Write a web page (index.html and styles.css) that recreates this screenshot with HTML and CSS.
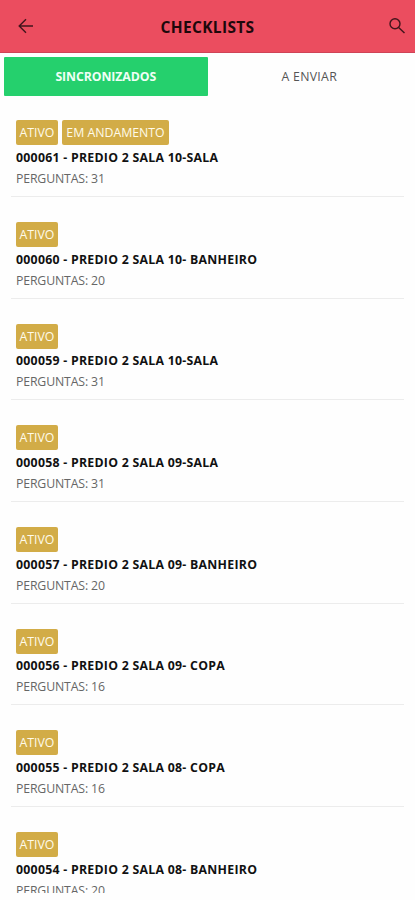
FILE: index.html
```html
<!DOCTYPE html>
<html lang="pt-BR">
<head>
<meta charset="utf-8">
<meta name="viewport" content="width=device-width, initial-scale=1">
<title>Checklists</title>
<link rel="stylesheet" href="styles.css">
</head>
<body>
<div class="app">
  <header class="header">
    <svg class="icon" viewBox="0 0 16 16" aria-hidden="true"><path d="M15 8H1.8M8 1.2 1.2 8 8 14.8"/></svg>
    <h1 class="title">CHECKLISTS</h1>
    <svg class="icon search" viewBox="0 0 16 16" aria-hidden="true"><circle cx="6" cy="5.8" r="5"/><path d="m9.6 9.4 5.9 5.7"/></svg>
  </header>
  <nav class="tabs">
    <a class="tab active"><span>SINCRONIZADOS</span></a>
    <a class="tab"><span>A ENVIAR</span></a>
  </nav>
  <main class="list">
    <article class="item">
      <div class="badges"><span class="badge">ATIVO</span><span class="badge wide">EM ANDAMENTO</span></div>
      <h2 class="name">000061 - PREDIO 2 SALA 10-SALA</h2>
      <p class="count">PERGUNTAS: 31</p>
    </article>
    <article class="item">
      <div class="badges"><span class="badge">ATIVO</span></div>
      <h2 class="name">000060 - PREDIO 2 SALA 10- BANHEIRO</h2>
      <p class="count">PERGUNTAS: 20</p>
    </article>
    <article class="item">
      <div class="badges"><span class="badge">ATIVO</span></div>
      <h2 class="name">000059 - PREDIO 2 SALA 10-SALA</h2>
      <p class="count">PERGUNTAS: 31</p>
    </article>
    <article class="item">
      <div class="badges"><span class="badge">ATIVO</span></div>
      <h2 class="name">000058 - PREDIO 2 SALA 09-SALA</h2>
      <p class="count">PERGUNTAS: 31</p>
    </article>
    <article class="item">
      <div class="badges"><span class="badge">ATIVO</span></div>
      <h2 class="name">000057 - PREDIO 2 SALA 09- BANHEIRO</h2>
      <p class="count">PERGUNTAS: 20</p>
    </article>
    <article class="item">
      <div class="badges"><span class="badge">ATIVO</span></div>
      <h2 class="name">000056 - PREDIO 2 SALA 09- COPA</h2>
      <p class="count">PERGUNTAS: 16</p>
    </article>
    <article class="item">
      <div class="badges"><span class="badge">ATIVO</span></div>
      <h2 class="name">000055 - PREDIO 2 SALA 08- COPA</h2>
      <p class="count">PERGUNTAS: 16</p>
    </article>
    <article class="item">
      <div class="badges"><span class="badge">ATIVO</span></div>
      <h2 class="name">000054 - PREDIO 2 SALA 08- BANHEIRO</h2>
      <p class="count">PERGUNTAS: 20</p>
    </article>
  </main>
</div>
</body>
</html>
```
FILE: styles.css
```css
* { box-sizing: border-box; }
body {
  margin: 0;
  background: #fefefe;
  font-family: "Open Sans", "Noto Sans", sans-serif;
}
.app {
  display: flex;
  flex-direction: column;
  height: 893px;
  overflow: hidden;
}
.header {
  flex: none;
  display: grid;
  grid-template-columns: 16px 1fr 16px;
  align-items: center;
  height: 53px;
  padding: 0 10px 0 18px;
  background: #eb4d5f;
  border-bottom: 1px solid #cf4357;
}
.icon {
  width: 16px;
  height: 16px;
  fill: none;
  stroke: #42151c;
  stroke-width: 1.4;
}
.title {
  margin: 0;
  padding: 1px 8px 0 0;
  text-align: center;
  font-size: 15.5px;
  font-weight: 700;
  line-height: 22px;
  letter-spacing: 0.35px;
  color: #1d080b;
}
.tabs {
  flex: none;
  display: flex;
  padding: 4px 4px 0;
}
.tab {
  flex: 1;
  height: 39px;
  line-height: 39px;
  text-align: center;
  font-size: 12.3px;
  letter-spacing: 0.3px;
  color: #555;
  border-radius: 1px;
}
.tab.active {
  background: #25d06d;
  color: #effff5;
  font-weight: 700;
  letter-spacing: -0.1px;
}
.list {
  margin-top: -0.6px;
  padding: 0 11px;
}
.item {
  height: 101.65px;
  padding: 24.9px 5px 0;
  border-bottom: 1px solid #ececec;
}
.badges {
  display: flex;
  gap: 4px;
  height: 25px;
}
.badge {
  width: 42px;
  height: 25px;
  line-height: 25px;
  border-radius: 2px;
  text-align: center;
  font-size: 12.3px;
  color: #fffbea;
  background: #d2ac47;
}
.badge.wide { width: 107px; }
.name {
  margin: 2.9px 0 0;
  font-size: 12.3px;
  font-weight: 700;
  line-height: 20px;
  letter-spacing: 0.27px;
  white-space: nowrap;
  color: #111;
}
.count {
  margin: 0;
  font-size: 12.3px;
  line-height: 21.6px;
  letter-spacing: -0.15px;
  color: #666;
}
```
